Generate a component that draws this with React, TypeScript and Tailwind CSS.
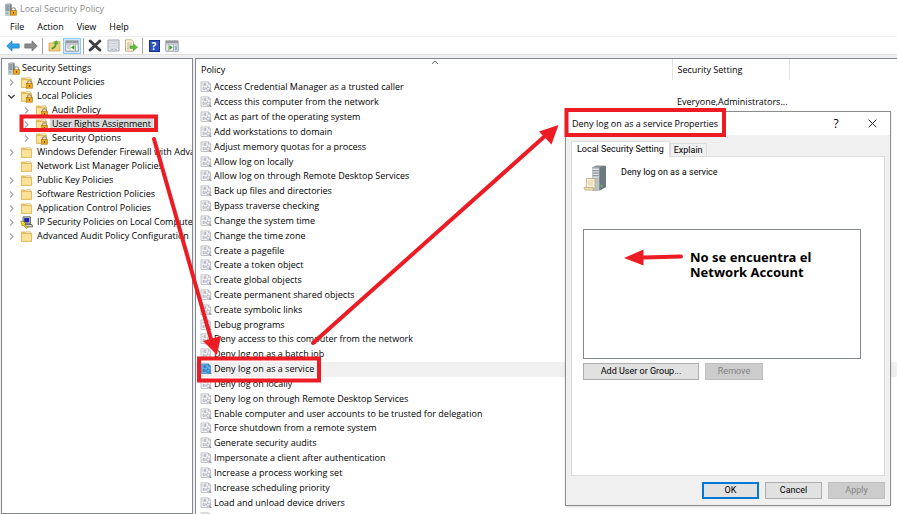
import React from 'react'

const MENU = ['File', 'Action', 'View', 'Help']

type TreeIcon = 'locked' | 'folder' | 'ipsec'

interface TreeItem {
  label: string
  level: 1 | 2
  icon: TreeIcon
  arrow: 'open' | 'closed' | 'none'
  selected?: boolean
}

const TREE: TreeItem[] = [
  { label: 'Account Policies', level: 1, icon: 'locked', arrow: 'closed' },
  { label: 'Local Policies', level: 1, icon: 'locked', arrow: 'open' },
  { label: 'Audit Policy', level: 2, icon: 'locked', arrow: 'closed' },
  { label: 'User Rights Assignment', level: 2, icon: 'locked', arrow: 'closed', selected: true },
  { label: 'Security Options', level: 2, icon: 'locked', arrow: 'closed' },
  { label: 'Windows Defender Firewall with Advanced Security', level: 1, icon: 'folder', arrow: 'closed' },
  { label: 'Network List Manager Policies', level: 1, icon: 'folder', arrow: 'none' },
  { label: 'Public Key Policies', level: 1, icon: 'folder', arrow: 'closed' },
  { label: 'Software Restriction Policies', level: 1, icon: 'folder', arrow: 'closed' },
  { label: 'Application Control Policies', level: 1, icon: 'folder', arrow: 'closed' },
  { label: 'IP Security Policies on Local Computer', level: 1, icon: 'ipsec', arrow: 'closed' },
  { label: 'Advanced Audit Policy Configuration', level: 1, icon: 'folder', arrow: 'closed' },
]

const POLICIES: { name: string; setting?: string; selected?: boolean }[] = [
  { name: 'Access Credential Manager as a trusted caller' },
  { name: 'Access this computer from the network', setting: 'Everyone,Administrators...' },
  { name: 'Act as part of the operating system' },
  { name: 'Add workstations to domain' },
  { name: 'Adjust memory quotas for a process' },
  { name: 'Allow log on locally' },
  { name: 'Allow log on through Remote Desktop Services' },
  { name: 'Back up files and directories' },
  { name: 'Bypass traverse checking' },
  { name: 'Change the system time' },
  { name: 'Change the time zone' },
  { name: 'Create a pagefile' },
  { name: 'Create a token object' },
  { name: 'Create global objects' },
  { name: 'Create permanent shared objects' },
  { name: 'Create symbolic links' },
  { name: 'Debug programs' },
  { name: 'Deny access to this computer from the network' },
  { name: 'Deny log on as a batch job' },
  { name: 'Deny log on as a service', selected: true },
  { name: 'Deny log on locally' },
  { name: 'Deny log on through Remote Desktop Services' },
  { name: 'Enable computer and user accounts to be trusted for delegation' },
  { name: 'Force shutdown from a remote system' },
  { name: 'Generate security audits' },
  { name: 'Impersonate a client after authentication' },
  { name: 'Increase a process working set' },
  { name: 'Increase scheduling priority' },
  { name: 'Load and unload device drivers' },
  { name: 'Lock pages in memory' },
]

function Padlock() {
  return (
    <g>
      <path d="M7.6 8V6.6a1.9 1.9 0 0 1 3.8 0V8" fill="none" stroke="#8a8a86" strokeWidth="1.1" />
      <rect x="6.5" y="7.6" width="6" height="4.6" fill="#eda91c" stroke="#a8700c" strokeWidth=".6" />
      <path d="M9.5 9v1.8" stroke="#6b4300" strokeWidth="1" />
    </g>
  )
}

function ServerLockIcon() {
  return (
    <svg width="13" height="13" viewBox="0 0 13 13" className="shrink-0" aria-hidden="true">
      <path d="M1 1.5 3 .5h4l1 1v10L6 12.5H1z" fill="#98a3ab" />
      <path d="M1 1.5h5v11H1z" fill="#c3cbd0" />
      <path d="M1.5 3h4M1.5 5h4M1.5 7h4" stroke="#5c6a73" strokeWidth=".9" />
      <path d="M6.5 1.5v8" stroke="#6b7880" strokeWidth=".8" />
      <path d="M2 10h1.5" stroke="#3daf4b" strokeWidth="1" />
      <Padlock />
    </svg>
  )
}

function FolderIcon({ locked }: { locked?: boolean }) {
  return (
    <svg width="13" height="13" viewBox="0 0 13 13" className="shrink-0" aria-hidden="true">
      <path d="M1 1.5h4l1 1.2h6v9H1z" fill="#e6bf5f" />
      <path d="M6 1.5h4.5v1.5H6z" fill="#f8f3df" stroke="#c9a650" strokeWidth=".4" />
      <path d="M1.4 3.6h10.2v7.7H1.4z" fill="#fbe29a" stroke="#d9b253" strokeWidth=".7" />
      {locked && <Padlock />}
    </svg>
  )
}

function IpSecIcon() {
  return (
    <svg width="13" height="13" viewBox="0 0 13 13" className="shrink-0" aria-hidden="true">
      <path d="M3 .8h7.5v7H3z" fill="#c9c9c0" stroke="#3c3c3c" strokeWidth=".7" />
      <path d="M4.2 2h5v4.4h-5z" fill="#1726b8" />
      <path d="M4 8.5h8l.6 2.4H5z" fill="#d6d6ce" stroke="#3c3c3c" strokeWidth=".7" />
      <path d="m.8 5.2 3 .2 1.6 2.2-.6 1 3 3-1 .8-3.4-3-1.4.2z" fill="#f4dc1c" stroke="#6f6200" strokeWidth=".5" />
    </svg>
  )
}

function PolicyIcon({ selected }: { selected?: boolean }) {
  const ink = selected ? '#1d6fb0' : '#a6a6b4'
  return (
    <svg width="12" height="12" viewBox="0 0 12 12" className="shrink-0" aria-hidden="true">
      <path d="M1 .9h7.6l2 2v7.6H1z" fill={selected ? '#69b1e8' : '#f6f6f8'} stroke={selected ? '#3f8dcb' : '#b4b4ba'} strokeWidth=".8" />
      <path d="M8.4 1v2.2h2.2" fill="none" stroke={ink} strokeWidth=".7" />
      <path d="M3 2.4v2.2M4.6 2.4h1.2v2.2H4.6zM3 6.4h1.2v2.2H3zM5.8 6.4v2.2M7.6 4.4v1.2" fill="none" stroke={ink} strokeWidth=".8" />
      <circle cx="8.2" cy="7.8" r="1.6" fill="none" stroke={ink} strokeWidth=".8" />
      <path d="m9.3 9 2 2" stroke={selected ? '#1d6fb0' : '#77777f'} strokeWidth="1" />
    </svg>
  )
}

function Chevron({ kind }: { kind: TreeItem['arrow'] }) {
  return (
    <svg width="9" height="9" viewBox="0 0 9 9" className="shrink-0" aria-hidden="true">
      {kind === 'closed' && <path d="m3 1.4 3 3.1-3 3.1" fill="none" stroke="#a0a0a0" strokeWidth="1.1" />}
      {kind === 'open' && <path d="M1.3 3 4.5 6l3.2-3" fill="none" stroke="#404040" strokeWidth="1.3" />}
    </svg>
  )
}

function ArrowIcon({ forward }: { forward?: boolean }) {
  return (
    <svg width="14" height="12" viewBox="0 0 14 12" aria-hidden="true">
      {forward ? (
        <path d="M13.3 6 8 .9v3H.8v4.2H8v3z" fill="#8b8b8b" stroke="#6c6c6c" strokeWidth=".7" />
      ) : (
        <path d="M.7 6 6 .9v3h7.2v4.2H6v3z" fill="#2fa3e6" stroke="#1b78bd" strokeWidth=".7" />
      )}
    </svg>
  )
}

function FolderUpIcon() {
  return (
    <svg width="13" height="13" viewBox="0 0 13 13" aria-hidden="true">
      <path d="M1 4h3.6l1-1.4H12V12H1z" fill="#efcf7a" stroke="#c79f45" strokeWidth=".7" />
      <path d="M3.6 9.6c2.6-.6 4-2.2 4.3-5" fill="none" stroke="#3c9d2e" strokeWidth="1.6" />
      <path d="M5.2 4.9 8.3 1l2.4 4.2z" fill="#4bb03a" />
    </svg>
  )
}

function ConsoleIcon({ tree }: { tree?: boolean }) {
  return (
    <svg width="14" height="12" viewBox="0 0 14 12" className="shrink-0" aria-hidden="true">
      <path d="M.8.8h12.4v10.4H.8z" fill="#fafafa" stroke="#8f9499" strokeWidth=".9" />
      <path d="M1 1h12v2.500H1z" fill="#949a9f" />
      <path d="M1 4.5h12" stroke="#b3b8bc" strokeWidth=".7" />
      {tree ? (
        <>
          <path d="M5 4.5v6.5M10.5 4.5v6.5" stroke="#9aa0a6" strokeWidth=".8" />
          <path d="M9.4 5v5L6 7.5z" fill="#2fa321" />
          <path d="M2 6h2M2 8h2" stroke="#8d949a" strokeWidth=".8" />
        </>
      ) : (
        <>
          <path d="M3.3 4.5v6.5M8.5 4.5v6.5" stroke="#9aa0a6" strokeWidth=".8" />
          <path d="M4.3 5v5l3.4-2.5z" fill="#2fa321" />
          <path d="M9.5 5.5h2.8V10H9.500z" fill="#8fb3d0" />
        </>
      )}
    </svg>
  )
}

function DeleteIcon() {
  return (
    <svg width="14" height="13" viewBox="0 0 14 13" aria-hidden="true">
      <path d="m2.2 2 9.6 9M11.800 2l-9.600 9" stroke="#3f3f3f" strokeWidth="3" strokeLinecap="round" />
    </svg>
  )
}

function PropertiesIcon() {
  return (
    <svg width="13" height="13" viewBox="0 0 13 13" aria-hidden="true">
      <path d="M1 1h11v11H1z" fill="#eceff1" stroke="#8f979e" strokeWidth=".9" />
      <path d="M3 3h7v6H3z" fill="#fff" stroke="#a8afb5" strokeWidth=".7" />
      <path d="M4 4.8h5M4 7h5M4 10.5h2M7.5 10.5h2" stroke="#83a3bd" strokeWidth=".8" />
    </svg>
  )
}

function ExportIcon() {
  return (
    <svg width="14" height="13" viewBox="0 0 14 13" aria-hidden="true">
      <path d="M1.5.8h6l2 2v9.4h-8z" fill="#fdf6d9" stroke="#b3a06a" strokeWidth=".8" />
      <path d="M3 4h4.5M3 6h4.5M3 8h2.5M3 10h2.5" stroke="#9a9278" strokeWidth=".7" />
      <path d="M6 7h3.5V5l4 3.2-4 3.2v-2H6z" fill="#5cbf44" stroke="#398f27" strokeWidth=".5" />
    </svg>
  )
}

function HelpIcon() {
  return (
    <span className="flex h-3 w-[11px] items-center justify-center border border-[#15308f] bg-[#2a50c4] text-[10px] leading-none font-bold text-white">
      ?
    </span>
  )
}

function ToolButton({ label, active, children }: { label: string; active?: boolean; children: React.ReactNode }) {
  return (
    <button
      aria-label={label}
      className={`flex h-4 w-[18px] items-center justify-center ${active ? 'border border-[#90c8f6] bg-[#cce8ff]' : ''}`}
    >
      {children}
    </button>
  )
}

function Separator() {
  return <span className="mx-0.5 h-4 w-px bg-[#a5a5a5]" />
}

function Tree() {
  return (
    <nav className="min-h-0 w-48 shrink-0 overflow-hidden border border-[#828790] bg-white pt-0.5 whitespace-nowrap">
      <button className="flex h-[14px] items-center gap-0.5 pl-[5px] leading-[14px]">
        <ServerLockIcon />
        Security Settings
      </button>
      <ul>
        {TREE.map((item) => (
          <li key={item.label}>
            <button className={`flex h-[14px] items-center leading-[14px] ${item.level === 2 ? 'pl-5' : 'pl-[5px]'}`}>
              <Chevron kind={item.arrow} />
              <span className="ml-1 flex items-center">
                {item.icon === 'ipsec' ? <IpSecIcon /> : <FolderIcon locked={item.icon === 'locked'} />}
              </span>
              <span className={`ml-0.5 px-0.5 ${item.selected ? 'bg-[#d9d9d9]' : ''}`}>{item.label}</span>
            </button>
          </li>
        ))}
      </ul>
    </nav>
  )
}

function PolicyTable() {
  return (
    <main className="relative min-w-0 flex-1 overflow-hidden border-t border-l border-[#828790] bg-white">
      <svg width="8" height="5" viewBox="0 0 8 5" className="absolute top-px left-1/3 ml-px" aria-hidden="true">
        <path d="m1 4 3-3 3 3" fill="none" stroke="#7a7a7a" />
      </svg>
      <table className="h-[466px] w-full table-fixed border-collapse text-left whitespace-nowrap">
        <colgroup>
          <col className="w-[476px]" />
          <col className="w-[117px]" />
          <col />
        </colgroup>
        <thead>
          <tr className="h-[21px]">
            <th className="border-r border-[#e2e2e2] p-0 pl-[5px] font-normal">Policy</th>
            <th className="border-r border-[#e2e2e2] p-0 pl-[5px] font-normal">Security Setting</th>
            <td />
          </tr>
        </thead>
        <tbody>
          {POLICIES.map((policy) => (
            <tr key={policy.name} className={policy.selected ? 'bg-[#f0f0f0]' : ''}>
              <td className="p-0 pl-1">
                <span className="flex items-center gap-0.5 leading-[14px]">
                  <PolicyIcon selected={policy.selected} />
                  {policy.name}
                </span>
              </td>
              <td className="p-0 pl-[5px] leading-[14px]">{policy.setting}</td>
              <td />
            </tr>
          ))}
        </tbody>
      </table>
    </main>
  )
}

function ServerIcon() {
  return (
    <svg width="24" height="26" viewBox="0 0 24 26" aria-hidden="true">
      <path d="M9 2.5 13 .5h8.5L23 2v20l-6 3.5H9z" fill="#87929a" />
      <path d="M9 2.5h7.5v22.7H9z" fill="#b9c1c6" />
      <path d="M16.5 2.5 23 .8V22l-6.5 3.3z" fill="#6d7981" />
      <path d="M10 4.5h5.5M10 7h5.5M10 9.5h5.5M10 12h5.5" stroke="#e9eef0" strokeWidth="1.1" />
      <path d="M10 5.6h5.5M10 8.1h5.5M10 10.6h5.5" stroke="#5d6970" strokeWidth=".6" />
      <circle cx="18.5" cy="21" r="1" fill="#55d23c" />
      <path d="M3.5 13.5h9.3c-1.2 1-.8 2.5-.8 4v6H3z" fill="#f8f1d8" stroke="#b9a878" strokeWidth=".8" />
      <path d="M1 22.5h9c0 1.5.6 2.5 2 2.5H2.6C1.4 25 1 24 1 22.5z" fill="#ece0b8" stroke="#b9a878" strokeWidth=".8" />
      <path d="M5 16h5M5 18h5M5 20h5" stroke="#d3c59a" strokeWidth=".7" />
    </svg>
  )
}

function PropertiesDialog() {
  const button = 'h-[17px] border text-center leading-none'
  return (
    <section
      role="dialog"
      aria-label="Deny log on as a service Properties"
      className="absolute top-[111px] left-[565px] flex h-[395px] w-[326px] flex-col border border-[#8c8c8c] bg-[#f0f0f0] font-['Roboto',sans-serif] text-[9px] shadow-sm"
    >
      <header className="flex h-[23px] shrink-0 items-center bg-white pl-1.5 font-['Open_Sans',sans-serif]">
        <h2 className="flex-1">Deny log on as a service Properties</h2>
        <button aria-label="Help" className="w-9 text-[12px]">?</button>
        <button aria-label="Close" className="flex w-9 justify-center">
          <svg width="9" height="9" viewBox="0 0 9 9" aria-hidden="true">
            <path d="m.7.7 7.6 7.6M8.3.7.7 8.3" stroke="#222" />
          </svg>
        </button>
      </header>

      <div className="flex min-h-0 flex-1 flex-col px-[5px] pt-1.5 pb-1.5">
        <div role="tablist" className="flex items-end">
          <button role="tab" aria-selected="true" className="z-10 -mb-px h-4 border border-b-0 border-[#dcdcdc] bg-white px-[5px] leading-none">
            Local Security Setting
          </button>
          <button role="tab" aria-selected="false" className="h-[13px] border border-b-0 border-[#dcdcdc] px-[3px] leading-none">
            Explain
          </button>
        </div>

        <div role="tabpanel" className="flex flex-1 flex-col border border-[#dcdcdc] bg-white px-[11px]">
          <div className="flex h-[72px] shrink-0 gap-[14px] pt-2">
            <ServerIcon />
            <p className="leading-[14px]">Deny log on as a service</p>
          </div>
          <div className="mr-3 h-[130px] border border-[#828790] bg-white pt-5 pl-[106px] font-['Noto_Sans',sans-serif] text-[13px] leading-[15px] font-bold">
            No se encuentra el
            <br />
            Network Account
          </div>
          <div className="mt-1 flex gap-1.5">
            <button className={`${button} w-[116px] border-[#adadad] bg-[#e1e1e1]`}>Add User or Group...</button>
            <button disabled className={`${button} w-[58px] border-[#bfbfbf] bg-[#cccccc] text-[#838383]`}>Remove</button>
          </div>
        </div>

        <footer className="flex justify-end gap-1.5 pt-1.5">
          <button className={`${button} w-[57px] border-[#0078d7] bg-[#e1e1e1] ring-1 ring-[#0078d7] ring-inset`}>OK</button>
          <button className={`${button} w-[57px] border-[#adadad] bg-[#e1e1e1]`}>Cancel</button>
          <button disabled className={`${button} w-[57px] border-[#bfbfbf] bg-[#cccccc] text-[#838383]`}>Apply</button>
        </footer>
      </div>
    </section>
  )
}

// Red marker strokes drawn over the windows
function Annotations() {
  return (
    <svg width="897" height="514" viewBox="0 0 897 514" className="pointer-events-none absolute top-0 left-0" aria-hidden="true">
      <g fill="none" stroke="#ed1c24" strokeWidth="4" strokeLinecap="round">
        <rect x="21.5" y="116.5" width="134.5" height="13.5" />
        <rect x="199" y="358.5" width="120" height="22" />
        <rect x="566.5" y="110" width="157.5" height="25" />
        <path d="m154 139 57 200M313 343l232-207" />
        <path d="m681 256.5-38 1" />
      </g>
      <g fill="#ed1c24">
        <path d="m203 341 18-5-4 19z" />
        <path d="m558.5 125-7 19.500L539 131.500z" />
        <path d="m624 258 19.5-8.5v16z" />
      </g>
    </svg>
  )
}

export default function App() {
  return (
    <div className="relative flex h-screen flex-col overflow-hidden bg-white font-['Open_Sans',sans-serif] text-[9px] text-black">
      <header className="flex h-[18px] shrink-0 items-center gap-[3px] pl-1 text-[#8a8a8a]">
        <ServerLockIcon />
        <h1>Local Security Policy</h1>
      </header>

      <nav className="flex h-[18px] shrink-0 items-center gap-[13px] pl-2.5">
        {MENU.map((label) => (
          <button key={label}>{label}</button>
        ))}
      </nav>

      <div role="toolbar" className="flex h-[18px] shrink-0 items-center border-t border-[#f0f0f0] pl-1">
        <ToolButton label="Back"><ArrowIcon /></ToolButton>
        <ToolButton label="Forward"><ArrowIcon forward /></ToolButton>
        <Separator />
        <ToolButton label="Up one level"><FolderUpIcon /></ToolButton>
        <ToolButton label="Show or hide console tree" active><ConsoleIcon tree /></ToolButton>
        <Separator />
        <ToolButton label="Delete"><DeleteIcon /></ToolButton>
        <ToolButton label="Properties"><PropertiesIcon /></ToolButton>
        <ToolButton label="Export list"><ExportIcon /></ToolButton>
        <Separator />
        <ToolButton label="Help"><HelpIcon /></ToolButton>
        <ToolButton label="Show or hide action pane"><ConsoleIcon /></ToolButton>
      </div>

      <div className="flex min-h-0 flex-1 gap-0.5 border-t border-[#e0e0e0] bg-[#f0f0f0] pt-[3px] pl-px">
        <Tree />
        <PolicyTable />
      </div>

      <PropertiesDialog />
      <Annotations />
    </div>
  )
}
